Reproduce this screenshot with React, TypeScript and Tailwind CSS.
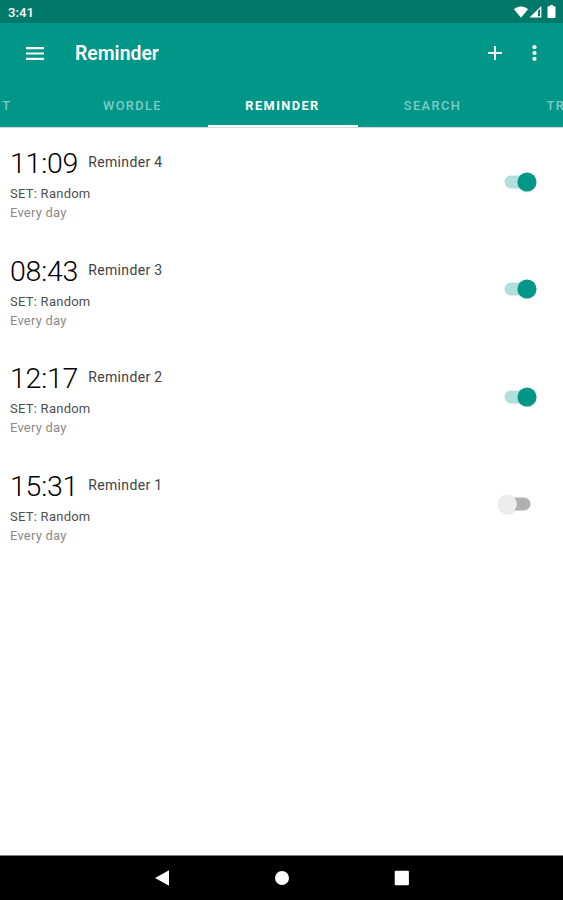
import clsx from 'clsx';

type Reminder = {
  time: string;
  name: string;
  enabled: boolean;
};

const REMINDERS: Reminder[] = [
  { time: '11:09', name: 'Reminder 4', enabled: true },
  { time: '08:43', name: 'Reminder 3', enabled: true },
  { time: '12:17', name: 'Reminder 2', enabled: true },
  { time: '15:31', name: 'Reminder 1', enabled: false },
];

// the first and last tabs are scrolled mostly out of view
const TABS = ['T', 'WORDLE', 'REMINDER', 'SEARCH', 'TR'];

const StatusBar = () => (
  <div className="h-[23px] shrink-0 bg-[#00796b] pl-[8px] pr-[7px] flex items-center justify-between text-white">
    <span className="text-[13.2px] leading-none font-medium pt-[2px]">3:41</span>
    <div className="flex items-center">
      <svg width="14" height="12" viewBox="0 0 14 12" fill="currentColor">
        <path d="M0 3.2C4-.5 10-.5 14 3.2L7 11.8z" />
      </svg>
      <svg className="ml-[1px]" width="13" height="12" viewBox="0 0 13 12" fill="none">
        <path d="M.5 11.6 12.3 0v11.6z" fill="currentColor" />
        <path d="M9 4.8 11 2.9v7.3H9z" fill="#00796b" />
      </svg>
      <svg className="ml-[5px]" width="9" height="13" viewBox="0 0 9 13" fill="currentColor">
        <path d="M3 0h3v1.3h1.6c.5 0 .9.4.9.9v9.9c0 .5-.4.9-.9.9H1.4c-.5 0-.9-.4-.9-.9V2.2c0-.5.4-.9.9-.9H3z" />
      </svg>
    </div>
  </div>
);

const Toolbar = () => (
  <div className="h-[60px] flex items-center pl-[26px] pr-[26px] text-white">
    <svg width="18" height="13" viewBox="0 0 18 13" fill="currentColor">
      <path d="M0 0h18v2.2H0zM0 5.4h18v2.2H0zM0 10.8h18V13H0z" />
    </svg>
    <h1 className="ml-[31px] text-[19.4px] leading-6 font-semibold flex-1 pt-[2px]">Reminder</h1>
    <svg width="14" height="14" viewBox="0 0 14 14" fill="currentColor">
      <path d="M6 0h2v6h6v2H8v6H6V8H0V6h6z" />
    </svg>
    <svg className="ml-[30px]" width="5" height="16" viewBox="0 0 5 16" fill="currentColor">
      <circle cx="2.5" cy="2.2" r="2.1" />
      <circle cx="2.5" cy="8" r="2.1" />
      <circle cx="2.5" cy="13.8" r="2.1" />
    </svg>
  </div>
);

const TabBar = () => (
  <div className="h-[44px] pl-[2px] flex justify-center overflow-hidden">
    {TABS.map(tab => {
      const active = tab === 'REMINDER';
      return (
        <div
          key={tab}
          className={clsx(
            'w-[150px] shrink-0 flex items-center border-b-2 pt-[4px] text-[12.8px] tracking-[1.4px]',
            active ? 'border-[#fafafa] text-white font-bold' : 'border-transparent text-[#80cbc4] font-medium',
            tab === 'T' && 'justify-end pr-[46px]',
            tab === 'TR' && 'pl-[39px]',
            tab !== 'T' && tab !== 'TR' && 'justify-center',
          )}
        >
          {tab}
        </div>
      );
    })}
  </div>
);

const Toggle = ({ on }: { on: boolean }) => (
  <svg width="42" height="24" viewBox="0 0 42 24">
    <rect x={on ? 6.5 : 4.5} y="5.5" width="28" height="13" rx="6.5" fill={on ? '#b2dfdb' : '#b0b0b0'} />
    <circle cx={on ? 29 : 9.5} cy="12.7" r="9.8" fill="#000" opacity="0.1" />
    <circle cx={on ? 29 : 9.5} cy="12" r="9.5" fill={on ? '#009688' : '#ececec'} />
  </svg>
);

const ReminderRow = ({ reminder }: { reminder: Reminder }) => (
  <li className="h-[107.5px] flex items-center justify-between pl-[10px] pr-[23px]">
    <div className="mt-[4px]">
      <div className="flex h-[39px]">
        <span className="text-[28.5px] leading-[37px] tracking-[-0.2px] font-light text-black">{reminder.time}</span>
        <span className="ml-[10px] text-[14px] leading-[35px] tracking-[0.35px] text-[#424242]">{reminder.name}</span>
      </div>
      <p className="text-[13px] leading-[19px] tracking-[0.25px] text-[#505050]">SET: Random</p>
      <p className="text-[13px] leading-[19px] tracking-[0.2px] text-[#8a8a8a]">Every day</p>
    </div>
    <Toggle on={reminder.enabled} />
  </li>
);

const NavBar = () => (
  <div className="h-[45px] shrink-0 bg-black border-t border-[#808080] grid grid-cols-[120px_120px_120px] justify-center items-center justify-items-center text-white">
    <svg width="16" height="16" viewBox="0 0 16 16" fill="currentColor">
      <path d="M15 .3v15.4L1 8z" />
    </svg>
    <svg width="16" height="16" viewBox="0 0 16 16" fill="currentColor">
      <circle cx="8" cy="8" r="7" />
    </svg>
    <svg width="16" height="16" viewBox="0 0 16 16" fill="currentColor">
      <rect x=".7" y=".7" width="14.2" height="14.6" rx="1" />
    </svg>
  </div>
);

export default function App() {
  return (
    <div className="w-full h-screen flex flex-col overflow-hidden bg-white font-['Roboto',sans-serif]">
      <StatusBar />
      <header className="shrink-0 bg-[#009688] border-b border-[#cfdedc]">
        <Toolbar />
        <TabBar />
      </header>
      <ul className="flex-1">
        {REMINDERS.map(r => <ReminderRow key={r.name} reminder={r} />)}
      </ul>
      <NavBar />
    </div>
  );
}
